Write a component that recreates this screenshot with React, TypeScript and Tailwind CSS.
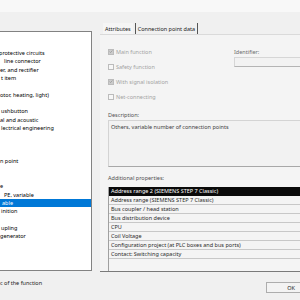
import React from 'react';

const listRows: { text: string; ml: string; selected?: boolean }[] = [
  { text: 'protective circuits', ml: '-ml-[1px]' },
  { text: 'line connector', ml: 'ml-[4px]' },
  { text: 'er, and rectifier', ml: 'ml-0' },
  { text: 't item', ml: 'ml-[1px]' },
  { text: '', ml: '' },
  { text: 'otor, heating, light)', ml: 'ml-0' },
  { text: '', ml: '' },
  { text: 'ushbutton', ml: 'ml-[1px]' },
  { text: 'al and acoustic', ml: 'ml-0' },
  { text: 'lectrical engineering', ml: 'ml-[1px]' },
  { text: '', ml: '' },
  { text: '', ml: '' },
  { text: '', ml: '' },
  { text: 'n point', ml: 'ml-0' },
  { text: '', ml: '' },
  { text: '', ml: '' },
  { text: 'e', ml: 'ml-0' },
  { text: 'PE, variable', ml: 'ml-[4px]' },
  { text: 'able', ml: 'ml-[2px]', selected: true },
  { text: 'inition', ml: 'ml-[1px]' },
  { text: '', ml: '' },
  { text: 'upling', ml: 'ml-[1px]' },
  { text: 'generator', ml: 'ml-0' },
];

const props = [
  'Address range 2 (SIEMENS STEP 7 Classic)',
  'Address range (SIEMENS STEP 7 Classic)',
  'Bus coupler / head station',
  'Bus distribution device',
  'CPU',
  'Coil Voltage',
  'Configuration project (at PLC boxes and bus ports)',
  'Contact: Switching capacity',
];

function Check({ checked, label }: { checked: boolean; label: string }) {
  return (
    <div className="flex h-[15px] items-center gap-[2px]">
      <div
        className={
          'flex h-[6px] w-[6px] items-center justify-center border border-[#bcbcbc] ' +
          (checked ? 'bg-[#cccccc]' : 'bg-[#f7f7f7]')
        }
      >
        {checked && (
          <svg width="5" height="5" viewBox="0 0 10 10">
            <path d="M1.5 5.2 L4 7.6 L8.6 2.4" fill="none" stroke="#8a8a8a" strokeWidth="1.6" />
          </svg>
        )}
      </div>
      <span className="text-[#a3a3a3]">{label}</span>
    </div>
  );
}

export default function App() {
  return (
    <div className="h-[300px] w-[300px] overflow-hidden bg-[#f0f0f0] font-['Noto_Sans',sans-serif] text-[5.5px] leading-[8px] text-black">
      <div className="h-[12px] bg-[#f8f8f8]" />
      <div className="flex h-[260px]">
        {/* left list */}
        <div className="w-[100px] shrink-0 pt-[19px]">
          <div className="h-[240px] w-[92px] overflow-hidden border border-l-0 border-[#828282] bg-white pt-[17px]">
            {listRows.map((r, i) => (
              <div
                key={i}
                className={
                  'flex h-[8.33px] items-center whitespace-nowrap ' +
                  (r.selected ? 'bg-[#0078d7] text-white' : '')
                }
              >
                <span className={r.ml}>{r.text}</span>
              </div>
            ))}
          </div>
        </div>

        {/* right tabs */}
        <div className="flex w-[200px] shrink-0 flex-col pt-[11px]">
          <div className="flex h-[11px] items-stretch pl-[3px]">
            <div className="flex items-center bg-[#f5f5f5] px-[2px] text-[#222]">Attributes</div>
            <div className="ml-[2px] flex items-center border-x border-[#555] px-[2px] text-[#222]">
              Connection point data
            </div>
          </div>
          <div className="flex flex-1 flex-col border-t border-b border-t-[#dadada] border-b-[#7a7a7a] bg-[#f4f4f4] pl-[8px]">
            <div className="flex pt-[9px]">
              <div className="w-[126px] shrink-0">
                <Check checked label="Main function" />
                <Check checked={false} label="Safety function" />
                <Check checked label="With signal isolation" />
                <Check checked={false} label="Net-connecting" />
              </div>
              <div className="flex-1 pt-[4px]">
                <div className="text-[#6d6d6d]">Identifier:</div>
                <div className="mt-[1px] h-[10px] w-[80px] border border-[#d6d6d6] border-b-[#b4b4b4] bg-[#f2f2f2]" />
              </div>
            </div>
            <div className="mt-[7px] h-[8px] text-[#505050]">Description:</div>
            <div className="mt-[1px] h-[47px] w-[200px] border border-[#d4d4d4] border-b-[#a8a8a8] bg-[#f2f2f2] px-[2px] pt-[2px] text-[#404040]">
              Others, variable number of connection points
            </div>
            <div className="mt-[7px] h-[8px] text-[#505050]">Additional properties:</div>
            <div className="mt-[5px] flex-1 border-l border-[#a0a0a0]">
              {props.map((p, i) => (
                <div
                  key={p}
                  className={
                    'flex h-[9px] items-center whitespace-nowrap border-b pl-[2px] ' +
                    (i === 0 ? 'border-[#0a0a0a] bg-[#0a0a0a] text-white' : 'border-[#c8c8c8] text-[#2a2a2a]')
                  }
                >
                  {p}
                </div>
              ))}
            </div>
          </div>
        </div>
      </div>
      <div className="flex h-[28px] items-start">
        <div className="w-[266px] shrink-0 pt-[7px] text-[#222]">c of the function</div>
        <div className="mt-[10px] flex h-[11px] w-[50px] shrink-0 items-center justify-center border border-[#adadad] bg-[#f3f3f3] text-[#222]">
          OK
        </div>
      </div>
    </div>
  );
}
